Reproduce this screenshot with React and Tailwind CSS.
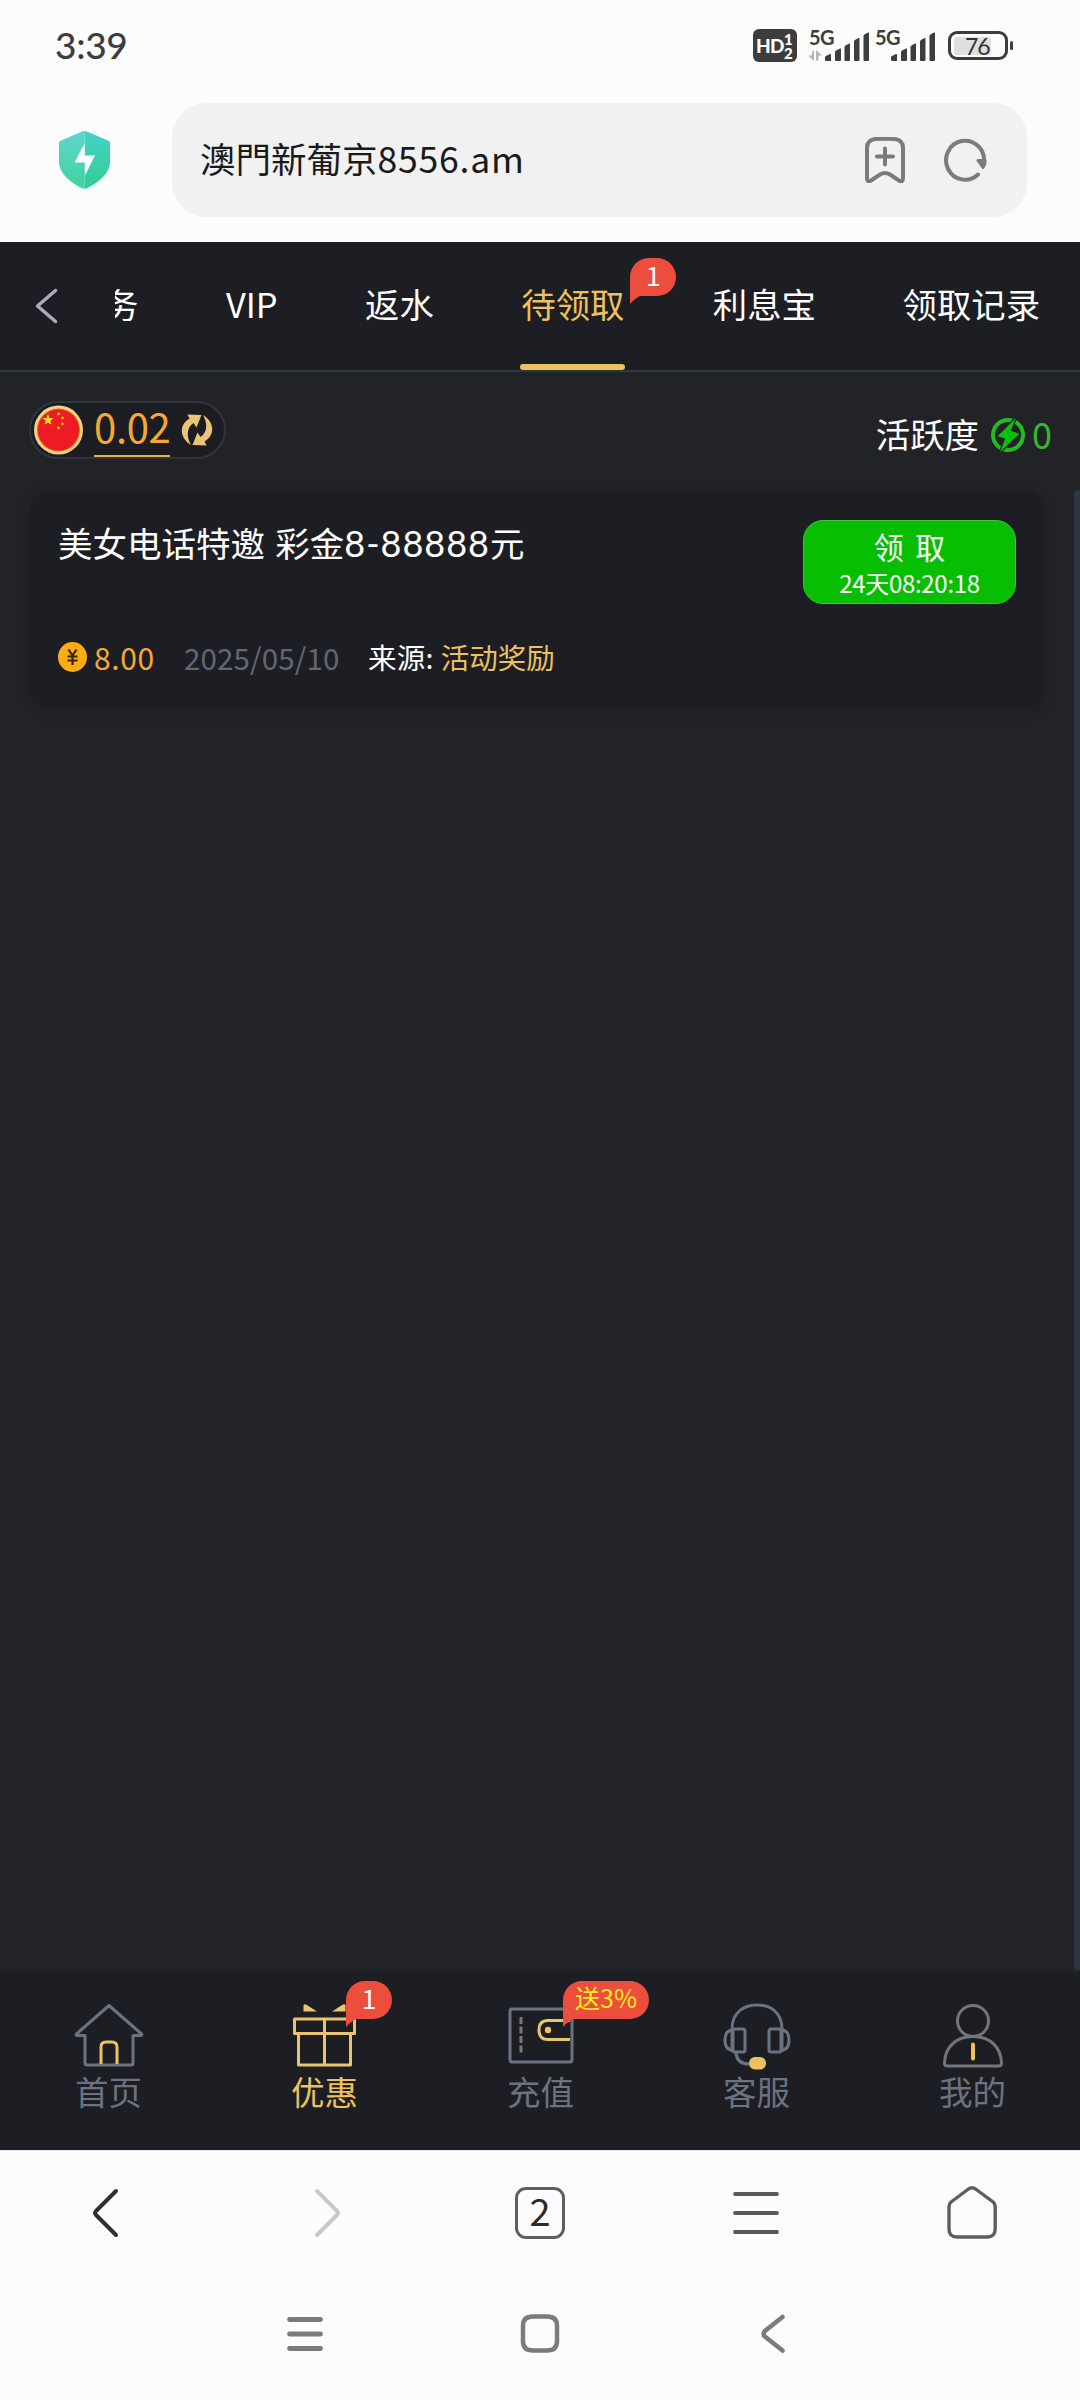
const GOLD = '#ecc15f';
const SLATE = '#6b7280';

/* Signal bars with slanted tops */
function Bars() {
  return (
    <svg width="46" height="30" viewBox="0 0 46 30" fill="#3d3d3d">
      <path d="M0 25.5q0-1 1-1.400l4-2q1-.4 1 .6V29H1q-1 0-1-1zM10 20q0-1 1-1.500l4-2q1-.4 1 .6V28q0 1-1 1h-4q-1 0-1-1zM19.500 15q0-1 1-1.500l3.500-2q1-.4 1 .6V28q0 1-1 1h-3.500q-1 0-1-1zM29 9.500q0-1 1-1.500l3.500-2q1-.4 1 .6V28q0 1-1 1H30q-1 0-1-1zM38.500 4q0-1 1-1.500l3.500-2q1-.4 1 .6V28q0 1-1 1h-3.500q-1 0-1-1z" />
    </svg>
  );
}

function Signal({ arrows }) {
  return (
    <div className="relative h-[32px] w-[60px] shrink-0">
      <span className="absolute -left-px -top-[3px] font-['Lato',sans-serif] text-[20px] leading-[20px] font-bold tracking-[-0.5px] text-[#3d3d3d]">5G</span>
      {arrows && (
        <svg className="absolute -left-[2px] top-[20px]" width="15" height="12" viewBox="0 0 15 12" fill="#b5b5b5">
          <path d="M4.500 1q1.500-1 1.500 0v10L0 5.500h3.500zM8 0l6 5.500h-3.500V10q-1.200 1.500-2.500 0z" />
        </svg>
      )}
      <div className="absolute left-[15px] top-[2px]"><Bars /></div>
    </div>
  );
}

function StatusBar() {
  return (
    <div className="flex h-[103px] items-start pl-[55px]">
      <span className="mt-[23px] w-[698px] font-['Lato','Noto_Sans_CJK_SC',sans-serif] text-[37px] leading-[44px] font-medium tracking-[-0.300px] text-[#3d3d3d]">3:39</span>
      <div className="mt-[29px] flex h-[33px] w-[44px] shrink-0 items-center rounded-[6px] bg-[#3d3d3d] pl-[3px] font-['Lato',sans-serif] font-black text-white">
        <span className="w-[28px] text-[19px] leading-[20px] tracking-[-0.800px]">HD</span>
        <div className="flex flex-col text-[15px] leading-[14px]">
          <span>1</span>
          <span>2</span>
        </div>
      </div>
      <div className="ml-[13px] mt-[30px] flex gap-[6px]">
        <Signal arrows />
        <Signal />
      </div>
      <div className="mt-[31px] ml-[12px] flex items-center gap-[2px]">
        <div className="flex h-[29px] w-[60px] items-center rounded-[9px] border-[3px] border-[#3d3d3d] p-[3px]">
          <div className="relative h-[18px] w-[37px] rounded-[3px] bg-[#dfdfdf]">
            <span className="absolute left-[11px] -top-[2px] font-['Lato',sans-serif] text-[23px] leading-[22px] tracking-[-1px] text-[#333]">76</span>
          </div>
        </div>
        <div className="h-[9px] w-[3px] rounded-[2px] bg-[#3d3d3d]" />
      </div>
    </div>
  );
}

function AddressRow() {
  return (
    <div className="flex h-[139px] items-start">
      <svg className="mt-[28px] ml-[59px] mr-[62px] shrink-0" width="51" height="58" viewBox="0 0 51 58">
        <defs>
          <linearGradient id="sl" x1="0" y1="0" x2="0" y2="1"><stop offset="0" stopColor="#5fd5ce" /><stop offset="1" stopColor="#3fd3a1" /></linearGradient>
          <linearGradient id="sr" x1="0" y1="0" x2="0" y2="1"><stop offset="0" stopColor="#45d2c8" /><stop offset="1" stopColor="#2fce94" /></linearGradient>
        </defs>
        <path d="M25.500 0q-1.500 0-3 .7L1.500 9.700Q0 10.400 0 12v19c0 10 9 19 22.500 26q1.500.8 3 .8z" fill="url(#sl)" />
        <path d="M25.500 0q1.500 0 3 .7l21 9q1.500.7 1.500 2.300v19c0 10-9 19-22.500 26q-1.500.8-3 .8z" fill="url(#sr)" />
        <path d="M25.800 12v12.500H36L26 44.500V31.500H15.500z" fill="#fff" />
      </svg>
      <div className="flex h-[114px] w-[855px] items-center rounded-[34px] bg-[#f1f1f1] pl-[28px]">
        <span className="w-[665px] pb-[4px] font-['Noto_Sans_CJK_TC','Noto_Sans_CJK_SC',sans-serif] text-[35.500px] leading-[44px] font-normal text-[#1a1a1a]">澳門新葡京<span className="tracking-[0.800px]">8556.am</span></span>
        <svg className="shrink-0" width="40" height="46" viewBox="0 0 40 46" fill="none" stroke="#7b7b7b" strokeWidth="4" strokeLinecap="round" strokeLinejoin="round">
          <path d="M2 11q0-8 8-9 10-.5 20 0 8 1 8 9v30q0 5-4 2.500l-9-6q-5-3.200-10 0l-9 6Q2 46 2 41zM12 19.500h16M20 11.500v16" />
        </svg>
        <svg className="ml-[39px] shrink-0" width="43" height="44" viewBox="0 0 43 44" fill="none" stroke="#7b7b7b" strokeWidth="4" strokeLinecap="round">
          <path d="M34 36.500A19 19.500 0 1 1 40 24" />
          <path d="M34 22.500h7q.5 4-2 7z" fill="#7b7b7b" strokeWidth="3" strokeLinejoin="round" />
        </svg>
      </div>
    </div>
  );
}

function Bubble({ children, className, tail }) {
  return (
    <div className={className}>
      <div className="flex h-[38px] w-full items-center justify-center rounded-[19px] rounded-bl-none bg-[#ec4d3d]">{children}</div>
      <svg className="-mt-px block" width="13" height="9" viewBox="0 0 13 9"><path d={tail} fill="#ec4d3d" /></svg>
    </div>
  );
}

const TAIL = 'M0 0H13Q6 2 0 9z';

function Tabs() {
  return (
    <div className="flex h-[130px] border-b-2 border-[#2f3640] bg-[#1d1e23] text-[34.400px] leading-[44px] text-white">
      <div className="flex w-[115px] shrink-0 items-center pl-[35px]">
        <svg width="23" height="36" viewBox="0 0 23 36" fill="none" stroke="#a8adba" strokeWidth="3.500" strokeLinecap="round" strokeLinejoin="round"><path d="M20.500 2.500L2.500 18l18 15.500" /></svg>
      </div>
      <div className="flex gap-[87.500px] overflow-hidden whitespace-nowrap">
        <span className="-ml-[11px] mt-[39px]">务</span>
        <span className="mt-[39px]">VIP</span>
        <span className="mt-[39px]">返水</span>
        <div className="relative flex h-[128px] flex-col justify-between text-[#ecc15f]">
          <span className="mt-[39px]">待领取</span>
          <div className="-ml-px h-[6px] w-[105px] rounded-[3px] bg-[#ecc15f]" />
          <Bubble className="absolute left-[109px] top-[16px] w-[46px]" tail={TAIL}>
            <span className="pb-[5px] text-[27px] leading-[30px] text-white">1</span>
          </Bubble>
        </div>
        <span className="mt-[39px]">利息宝</span>
        <span className="-ml-px mt-[39px]">领取记录</span>
      </div>
    </div>
  );
}

function Star({ x, y, r }) {
  const pts = Array.from({ length: 10 }, (_, i) => {
    const a = (-90 + i * 36) * Math.PI / 180;
    const q = i % 2 ? r * 0.4 : r;
    return `${x + q * Math.cos(a)},${y + q * Math.sin(a)}`;
  }).join(' ');
  return <polygon points={pts} fill="#ffe11a" />;
}

function BalanceRow() {
  return (
    <div className="flex h-[118px] items-start justify-between pl-[29px] pr-[28px] pt-[29px]">
      <div className="flex h-[58px] w-[197px] items-center rounded-full border-2 border-[#2f3640] bg-[#1b1d22] pl-[3px]">
        <svg className="shrink-0" width="49" height="50" viewBox="0 0 49 50">
          <circle cx="24.500" cy="25" r="24.500" fill="#f8cf80" />
          <circle cx="24.500" cy="25" r="21.500" fill="#c8702c" />
          <circle cx="24.500" cy="25" r="20.500" fill="#ed1c24" />
          <Star x={14} y={15} r={6} />
          <Star x={24.500} y={9} r={2} /><Star x={28.500} y={13} r={2} /><Star x={28.500} y={19} r={2} /><Star x={24.500} y={23} r={2} />
        </svg>
        <div className="ml-[11px] flex h-[54px] w-[76px] flex-col justify-between">
          <span className="-mt-[3px] text-center text-[40px] leading-[52px] tracking-[-0.300px] text-[#f5a833]">0.02</span>
          <div className="h-[2px] bg-[#ecb04a]" />
        </div>
        <svg className="ml-[11px] shrink-0" width="32" height="32" viewBox="0 0 32 32" fill="#ecc372">
          <path d="M6.500 0.500L20.500 1 15.500 13.500 12.500 9C6.500 13 4.500 21 10 31 -1.500 24-2.500 11 8.500 4.500z" />
          <path d="M25.500 31.500L11.500 31 16.500 18.500 19.500 23C25.500 19 27.500 11 22 1 33.500 8 34.500 21 23.500 27.500z" />
        </svg>
      </div>
      <div className="flex h-[64px] items-center">
        <span className="text-[34.400px] leading-[44px] text-white">活跃度</span>
        <svg className="ml-[12px] mt-[3px]" width="34" height="38" viewBox="0 0 34 38">
          <circle cx="17" cy="19" r="15" fill="none" stroke="#25bb20" strokeWidth="4" />
          <path d="M26.500 -0.500L5.500 20.500l8 2.500-6 15.500 22-21-9-3z" fill="#0bc005" stroke="#222327" strokeWidth="1.200" />
        </svg>
        <span className="ml-[7px] w-[20px] text-[36px] leading-[44px] text-[#33b82e]">0</span>
      </div>
    </div>
  );
}

function RewardCard() {
  return (
    <div className="ml-[30px] flex h-[218px] w-[1014px] flex-col justify-between rounded-[20px] bg-[#1d1e23] px-[28px] pb-[29px] pt-[30px] shadow-[0_4px_14px_rgba(0,0,0,0.12)]">
      <div className="flex items-start justify-between">
        <span className="text-[34.500px] leading-[44px] whitespace-pre text-white">美女电话特邀<span className="tracking-[2.600px]"> </span>彩金<span className="font-['Lato',sans-serif] text-[36px] tracking-[1px]">8-88888</span>元</span>
        <div className="flex h-[84px] w-[213px] flex-col items-center rounded-[20px] border border-[#3fc43a] bg-[#08be02] text-white">
          <span className="mt-[3px] text-[30px] leading-[44px] [word-spacing:5px]">领 取</span>
          <span className="text-[24px] leading-[30px] tracking-[-0.300px]">24天08:20:18</span>
        </div>
      </div>
      <div className="flex items-center text-[29px] leading-[44px]">
        <svg width="29" height="30" viewBox="0 0 29 30"><ellipse cx="14.500" cy="15" rx="14.500" ry="15" fill="#fdab12" /><path d="M10.500 7.500l4 6 4-6M9.500 14.500h10M9.500 18.500h10M14.500 13.500V23" fill="none" stroke="#332711" strokeWidth="2.200" /></svg>
        <span className="ml-[7px] w-[90px] text-[30px] tracking-[0.600px] text-[#f5a833]">8.00</span>
        <span className="w-[184px] text-[29.500px] tracking-[0.150px] text-[#636673]">2025/05/10</span>
        <span className="text-[28.500px] tracking-[0.300px] text-white">来源:</span>
        <span className="ml-[7px] text-[28.500px] text-[#ecc15f]">活动奖励</span>
      </div>
    </div>
  );
}

const ICONS = {
  home: (
    <svg width="70" height="66" viewBox="0 0 70 66" fill="none" stroke={SLATE} strokeWidth="3" strokeLinejoin="round">
      <path d="M35 3.500L2.500 32q-1 1.500 1 1.500H11V61q0 2 2 2h44q2 0 2-2V33.500h7.500q2 0 1-1.500z" />
      <path d="M27 62V45q0-5 5-5h6q5 0 5 5v17" stroke={GOLD} />
    </svg>
  ),
  gift: (
    <svg width="70" height="66" viewBox="0 0 70 66" fill="none" stroke="#ebc472" strokeWidth="3" strokeLinejoin="round">
      <path d="M4.500 17h60v14.500h-60zM8.500 31.500h52V63h-52zM34.500 17v46" />
      <path d="M13.500 3q1-1.500 3-.3L27 9.500H13.500zM55.500 3q-1-1.500-3-.3L42 9.500h13.500z" fill="#ebc472" stroke="none" />
    </svg>
  ),
  wallet: (
    <svg width="70" height="66" viewBox="0 0 70 66" fill="none" stroke={SLATE} strokeWidth="3" strokeLinejoin="round">
      <rect x="4" y="7" width="62" height="53" rx="2" />
      <path d="M15 15v38" strokeDasharray="7 2.500" stroke="#77797d" />
      <path d="M64 18.500H42q-9 0-9 9.500t9 9.500h22" stroke="#e6c575" />
      <circle cx="42" cy="28" r="3.200" fill={GOLD} stroke="none" />
    </svg>
  ),
  headset: (
    <svg width="70" height="68" viewBox="0 0 70 68" className="-mb-[2px]" fill="none" stroke={SLATE} strokeWidth="3">
      <path d="M10 50V27C10 11 21 3 35 3s25 8 25 24v23" />
      <rect x="11" y="27" width="12" height="23" rx="2" /><rect x="47" y="27" width="12" height="23" rx="2" />
      <path d="M11 28q-8 0-8 10t8 10M59 28q8 0 8 10t-8 10M14 51q1 11 13 11" />
      <rect x="27" y="55" width="17" height="12.500" rx="6" fill={GOLD} stroke="none" />
    </svg>
  ),
  user: (
    <svg width="70" height="66" viewBox="0 0 70 66" fill="none" stroke="#72757b" strokeWidth="3" strokeLinejoin="round">
      <ellipse cx="35" cy="19" rx="15.500" ry="15.500" />
      <path d="M35 34.500C17 34.500 7 46 6.500 61q0 3 3 3h51q3 0 3-3C63 46 53 34.500 35 34.500z" />
      <path d="M35 42.500v14" stroke={GOLD} strokeWidth="4" strokeLinecap="round" />
    </svg>
  ),
};

function NavItem({ icon, label, active, children }) {
  return (
    <div className="relative flex w-[216px] shrink-0 flex-col items-center pt-[30px]">
      {ICONS[icon]}
      <span className={active ? 'mt-[1px] text-[33.500px] leading-[44px] text-[#ecc15f]' : 'mt-[1px] text-[33.500px] leading-[44px] text-[#6b7280]'}>{label}</span>
      {children}
    </div>
  );
}

function BottomNav() {
  return (
    <div className="flex h-[178px] bg-[#1d1e23] pl-[0.500px]">
      <NavItem icon="home" label="首页" />
      <NavItem icon="gift" label="优惠" active>
        <Bubble className="absolute left-[129.500px] top-[9px] w-[46px]" tail={TAIL}>
          <span className="pb-[5px] text-[27px] leading-[30px] text-white">1</span>
        </Bubble>
      </NavItem>
      <NavItem icon="wallet" label="充值">
        <Bubble className="absolute left-[130.500px] top-[9px] w-[86px]" tail={TAIL}>
          <span className="pb-[6px] text-[25px] leading-[30px] text-[#fff01f]">送3%</span>
        </Bubble>
      </NavItem>
      <NavItem icon="headset" label="客服" />
      <NavItem icon="user" label="我的" />
    </div>
  );
}

function BrowserBar() {
  return (
    <div className="grid h-[126px] grid-cols-5 items-center justify-items-center border-t border-[#e6e6e6] pb-[2px]">
      <svg width="28" height="50" viewBox="0 0 28 50" className="-ml-[6px]" fill="none" stroke="#303030" strokeWidth="4" strokeLinecap="round" strokeLinejoin="round"><path d="M25 3L5 23q-2 2 0 4l20 20" /></svg>
      <svg width="28" height="50" viewBox="0 0 28 50" className="ml-[8px]" fill="none" stroke="#c9c9c9" strokeWidth="4" strokeLinecap="round" strokeLinejoin="round"><path d="M3 3l20 20q2 2 0 4L3 47" /></svg>
      <div className="flex h-[52px] w-[50px] items-center justify-center rounded-[11px] border-[3px] border-[#5e5e5e]">
        <span className="pb-[5px] text-[38px] leading-[40px] font-normal text-[#2b2b2b]">2</span>
      </div>
      <svg width="46" height="42" viewBox="0 0 46 42" fill="none" stroke="#5a5a5a" strokeWidth="3.800" strokeLinecap="round"><path d="M2 2h42M2 21h42M2 40h42" /></svg>
      <svg width="50" height="53" viewBox="0 0 50 53" fill="none" stroke="#5e5e5e" strokeWidth="3.400" strokeLinejoin="round"><path d="M21.500 3q3.500-2.400 7 0l17 12.500q2.700 2 2.700 5.500V43q0 8-8 8H10q-8 0-8-8V21q0-3.500 2.700-5.500z" /></svg>
    </div>
  );
}

function SystemBar() {
  return (
    <div className="flex h-[124px] items-start pt-[37px]">
      <svg className="ml-[286px]" width="38" height="41" viewBox="0 0 38 41" fill="none" stroke="#7b7b7b" strokeWidth="4.800" strokeLinecap="round"><path d="M3.500 6.500h31M3.500 21h31M3.500 35.500h31" /></svg>
      <svg className="ml-[196px]" width="40" height="41" viewBox="0 0 40 41" fill="none" stroke="#7b7b7b" strokeWidth="4.500"><path d="M13 3.500h14q10 0 10 9v16q0 9-10 9H13q-10 0-10-9v-16q0-9 10-9z" /></svg>
      <svg className="ml-[201px]" width="25" height="41" viewBox="0 0 25 41" fill="none" stroke="#7b7b7b" strokeWidth="4.500" strokeLinecap="round"><path d="M21.500 4L4.500 17.500q-4 3.500 0 6.500L21.500 37.500" /></svg>
    </div>
  );
}

export default function App() {
  return (
    <div className="flex h-[2400px] w-[1080px] flex-col overflow-hidden bg-[#fcfcfc] font-['Noto_Sans_CJK_SC',sans-serif]">
      <StatusBar />
      <AddressRow />
      <Tabs />
      <div className="flex h-[1600px] flex-col bg-[#222327]">
        <BalanceRow />
        <div className="flex h-[1482px] items-start justify-between">
          <RewardCard />
          <div className="h-[1480px] w-[6px] rounded-l-[3px] bg-[#2d3541]" />
        </div>
      </div>
      <BottomNav />
      <BrowserBar />
      <SystemBar />
    </div>
  );
}
